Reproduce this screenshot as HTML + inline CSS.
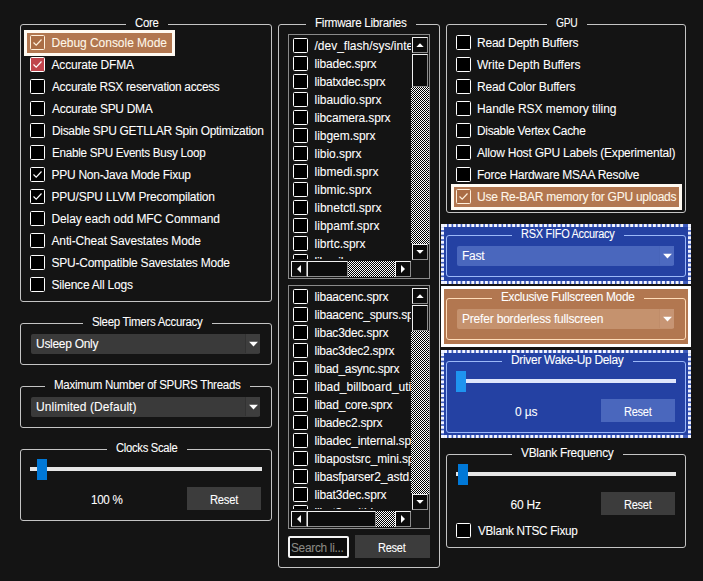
<!DOCTYPE html>
<html><head><meta charset="utf-8"><style>
html,body{margin:0;padding:0;background:#141414;width:703px;height:581px;overflow:hidden;}
.a{position:absolute;}
.t{position:absolute;white-space:pre;font-family:"Liberation Sans", sans-serif;font-size:12px;color:#fff;-webkit-text-stroke:0.08px currentColor;}
</style></head><body>
<div class="a" style="left:20px;top:24px;width:252px;height:278px;border:1px solid #c4c4c4;border-radius:3px;box-sizing:border-box;"></div>
<div class="a" style="left:126px;top:22px;width:42px;height:5px;background:#141414;"></div>
<div class="t" style="left: 135px; top: 15.04px; color: rgb(255, 255, 255); font-size: 12px; line-height: 16px; letter-spacing: -0.3px; transform: scaleX(0.9471); transform-origin: 0px 0px;">Core</div>
<div class="a" style="left:24px;top:30px;width:151px;height:26px;background:#b27750;border:3px solid #fffaf2;box-sizing:border-box;"></div>
<div class="a" style="left:30px;top:35px;width:15px;height:15px;border:1px solid #fff0dc;border-radius:1.5px;box-sizing:border-box;background:#aa6d45;"></div>
<svg class="a" style="left:30px;top:35px" width="15" height="15" viewBox="0 0 15 15"><path d="M3.5 7.5 L6.2 10.2 L11.5 4.5" fill="none" stroke="#fff0dc" stroke-width="1.15"></path></svg>
<div class="t" style="left: 51.5px; top: 34.84px; color: rgb(255, 247, 234); font-size: 12px; line-height: 16px; letter-spacing: -0.034px;">Debug Console Mode</div>
<div class="a" style="left:30px;top:57px;width:15px;height:15px;border:1px solid #ffffff;border-radius:1.5px;box-sizing:border-box;background:#c0444c;"></div>
<svg class="a" style="left:30px;top:57px" width="15" height="15" viewBox="0 0 15 15"><path d="M3.5 7.5 L6.2 10.2 L11.5 4.5" fill="none" stroke="#ffffff" stroke-width="1.15"></path></svg>
<div class="t" style="left: 51.5px; top: 56.84px; color: rgb(255, 255, 255); font-size: 12px; line-height: 16px; letter-spacing: -0.182px;">Accurate DFMA</div>
<div class="a" style="left:30px;top:79px;width:15px;height:15px;border:1px solid #ffffff;border-radius:1.5px;box-sizing:border-box;background:#000;"></div>
<div class="t" style="left: 51.5px; top: 78.84px; color: rgb(255, 255, 255); font-size: 12px; line-height: 16px; letter-spacing: -0.3px; transform: scaleX(0.9885); transform-origin: 0px 0px;">Accurate RSX reservation access</div>
<div class="a" style="left:30px;top:101px;width:15px;height:15px;border:1px solid #ffffff;border-radius:1.5px;box-sizing:border-box;background:#000;"></div>
<div class="t" style="left: 51.5px; top: 100.84px; color: rgb(255, 255, 255); font-size: 12px; line-height: 16px; letter-spacing: -0.3px; transform: scaleX(0.9992); transform-origin: 0px 0px;">Accurate SPU DMA</div>
<div class="a" style="left:30px;top:123px;width:15px;height:15px;border:1px solid #ffffff;border-radius:1.5px;box-sizing:border-box;background:#000;"></div>
<div class="t" style="left: 51.5px; top: 122.84px; color: rgb(255, 255, 255); font-size: 12px; line-height: 16px; letter-spacing: -0.3px; transform: scaleX(0.9961); transform-origin: 0px 0px;">Disable SPU GETLLAR Spin Optimization</div>
<div class="a" style="left:30px;top:145px;width:15px;height:15px;border:1px solid #ffffff;border-radius:1.5px;box-sizing:border-box;background:#000;"></div>
<div class="t" style="left: 51.5px; top: 144.84px; color: rgb(255, 255, 255); font-size: 12px; line-height: 16px; letter-spacing: -0.3px; transform: scaleX(0.9756); transform-origin: 0px 0px;">Enable SPU Events Busy Loop</div>
<div class="a" style="left:30px;top:167px;width:15px;height:15px;border:1px solid #ffffff;border-radius:1.5px;box-sizing:border-box;background:#000;"></div>
<svg class="a" style="left:30px;top:167px" width="15" height="15" viewBox="0 0 15 15"><path d="M3.5 7.5 L6.2 10.2 L11.5 4.5" fill="none" stroke="#ffffff" stroke-width="1.15"></path></svg>
<div class="t" style="left: 51.5px; top: 166.84px; color: rgb(255, 255, 255); font-size: 12px; line-height: 16px; letter-spacing: -0.268px;">PPU Non-Java Mode Fixup</div>
<div class="a" style="left:30px;top:189px;width:15px;height:15px;border:1px solid #ffffff;border-radius:1.5px;box-sizing:border-box;background:#000;"></div>
<svg class="a" style="left:30px;top:189px" width="15" height="15" viewBox="0 0 15 15"><path d="M3.5 7.5 L6.2 10.2 L11.5 4.5" fill="none" stroke="#ffffff" stroke-width="1.15"></path></svg>
<div class="t" style="left: 51.5px; top: 188.84px; color: rgb(255, 255, 255); font-size: 12px; line-height: 16px; letter-spacing: -0.219px;">PPU/SPU LLVM Precompilation</div>
<div class="a" style="left:30px;top:211px;width:15px;height:15px;border:1px solid #ffffff;border-radius:1.5px;box-sizing:border-box;background:#000;"></div>
<div class="t" style="left: 51.5px; top: 210.84px; color: rgb(255, 255, 255); font-size: 12px; line-height: 16px; letter-spacing: -0.116px;">Delay each odd MFC Command</div>
<div class="a" style="left:30px;top:233px;width:15px;height:15px;border:1px solid #ffffff;border-radius:1.5px;box-sizing:border-box;background:#000;"></div>
<div class="t" style="left: 51.5px; top: 232.84px; color: rgb(255, 255, 255); font-size: 12px; line-height: 16px; letter-spacing: -0.13px;">Anti-Cheat Savestates Mode</div>
<div class="a" style="left:30px;top:255px;width:15px;height:15px;border:1px solid #ffffff;border-radius:1.5px;box-sizing:border-box;background:#000;"></div>
<div class="t" style="left: 51.5px; top: 254.84px; color: rgb(255, 255, 255); font-size: 12px; line-height: 16px; letter-spacing: -0.239px;">SPU-Compatible Savestates Mode</div>
<div class="a" style="left:30px;top:277px;width:15px;height:15px;border:1px solid #ffffff;border-radius:1.5px;box-sizing:border-box;background:#000;"></div>
<div class="t" style="left: 51.5px; top: 276.84px; color: rgb(255, 255, 255); font-size: 12px; line-height: 16px; letter-spacing: -0.216px;">Silence All Logs</div>
<div class="a" style="left:20px;top:323px;width:252px;height:42px;border:1px solid #c4c4c4;border-radius:3px;box-sizing:border-box;"></div>
<div class="a" style="left:83px;top:321px;width:129px;height:5px;background:#141414;"></div>
<div class="t" style="left: 92px; top: 314.04px; color: rgb(255, 255, 255); font-size: 12px; line-height: 16px; letter-spacing: -0.3px; transform: scaleX(0.9546); transform-origin: 0px 0px;">Sleep Timers Accuracy</div>
<div class="a" style="left:31px;top:334px;width:229px;height:20px;background:#3a3a3a;border-radius:2px;"></div>
<div class="a" style="left:245px;top:334px;width:15px;height:19px;background:#3e3e3e;border-left:1px solid #323232;box-sizing:border-box;"></div>
<svg class="a" style="left:0;top:0" width="703" height="581"><path d="M249.1 341.8 H257.9 L253.5 346.4 Z" fill="#fff"></path></svg>
<div class="t" style="left: 36px; top: 335.84px; color: rgb(255, 255, 255); font-size: 12px; line-height: 16px; letter-spacing: -0.287px;">Usleep Only</div>
<div class="a" style="left:20px;top:386px;width:252px;height:42px;border:1px solid #c4c4c4;border-radius:3px;box-sizing:border-box;"></div>
<div class="a" style="left:45px;top:384px;width:205px;height:5px;background:#141414;"></div>
<div class="t" style="left: 54px; top: 377.04px; color: rgb(255, 255, 255); font-size: 12px; line-height: 16px; letter-spacing: -0.3px; transform: scaleX(0.962); transform-origin: 0px 0px;">Maximum Number of SPURS Threads</div>
<div class="a" style="left:31px;top:397px;width:229px;height:20px;background:#3a3a3a;border-radius:2px;"></div>
<div class="a" style="left:245px;top:397px;width:15px;height:19px;background:#3e3e3e;border-left:1px solid #323232;box-sizing:border-box;"></div>
<svg class="a" style="left:0;top:0" width="703" height="581"><path d="M249.1 404.8 H257.9 L253.5 409.4 Z" fill="#fff"></path></svg>
<div class="t" style="left: 36px; top: 398.84px; color: rgb(255, 255, 255); font-size: 12px; line-height: 16px; letter-spacing: 0.063px;">Unlimited (Default)</div>
<div class="a" style="left:20px;top:449px;width:252px;height:72px;border:1px solid #c4c4c4;border-radius:3px;box-sizing:border-box;"></div>
<div class="a" style="left:107px;top:447px;width:80px;height:5px;background:#141414;"></div>
<div class="t" style="left: 116px; top: 440.04px; color: rgb(255, 255, 255); font-size: 12px; line-height: 16px; letter-spacing: -0.3px; transform: scaleX(0.9351); transform-origin: 0px 0px;">Clocks Scale</div>
<div class="a" style="left:30px;top:467px;width:232px;height:4px;background:#e6e6e6;"></div>
<div class="a" style="left:37px;top:459px;width:10px;height:21px;background:#0078d7;"></div>
<div class="t" style="left: 90.5px; top: 492.34px; color: rgb(255, 255, 255); font-size: 12px; line-height: 16px; letter-spacing: -0.3px; transform: scaleX(0.9683); transform-origin: 0px 0px;">100 %</div>
<div class="a" style="left:187px;top:487px;width:74px;height:23px;background:#3c3c3c;"></div>
<div class="t" style="left: 209.8px; top: 491.84px; color: rgb(255, 255, 255); font-size: 12px; line-height: 16px; letter-spacing: -0.3px; transform: scaleX(0.9377); transform-origin: 0px 0px;">Reset</div>
<div class="a" style="left:278px;top:24px;width:162px;height:544px;border:1px solid #c4c4c4;border-radius:3px;box-sizing:border-box;"></div>
<div class="a" style="left:306px;top:22px;width:110px;height:5px;background:#141414;"></div>
<div class="t" style="left: 315px; top: 15.04px; color: rgb(255, 255, 255); font-size: 12px; line-height: 16px; letter-spacing: -0.3px; transform: scaleX(0.9739); transform-origin: 0px 0px;">Firmware Libraries</div>
<div class="a" style="left:288px;top:34px;width:142px;height:245px;border:1px solid #8a8a8a;box-sizing:border-box;"></div>
<div class="a" style="left:289px;top:35px;width:122px;height:224px;overflow:hidden"><div class="a" style="left:4px;top:3px;width:15px;height:15px;border:1px solid #fff;border-radius:1.5px;box-sizing:border-box;background:#000"></div><div class="t" style="left: 25.5px; top: 3.34px; line-height: 16px; letter-spacing: 0px;">/dev_flash/sys/internal</div><div class="a" style="left:4px;top:21px;width:15px;height:15px;border:1px solid #fff;border-radius:1.5px;box-sizing:border-box;background:#000"></div><div class="t" style="left: 25.5px; top: 21.34px; line-height: 16px; letter-spacing: -0.185px;">libadec.sprx</div><div class="a" style="left:4px;top:39px;width:15px;height:15px;border:1px solid #fff;border-radius:1.5px;box-sizing:border-box;background:#000"></div><div class="t" style="left: 25.5px; top: 39.34px; line-height: 16px; letter-spacing: -0.183px;">libatxdec.sprx</div><div class="a" style="left:4px;top:57px;width:15px;height:15px;border:1px solid #fff;border-radius:1.5px;box-sizing:border-box;background:#000"></div><div class="t" style="left: 25.5px; top: 57.34px; line-height: 16px; letter-spacing: -0.031px;">libaudio.sprx</div><div class="a" style="left:4px;top:75px;width:15px;height:15px;border:1px solid #fff;border-radius:1.5px;box-sizing:border-box;background:#000"></div><div class="t" style="left: 25.5px; top: 75.34px; line-height: 16px; letter-spacing: -0.156px;">libcamera.sprx</div><div class="a" style="left:4px;top:93px;width:15px;height:15px;border:1px solid #fff;border-radius:1.5px;box-sizing:border-box;background:#000"></div><div class="t" style="left: 25.5px; top: 93.34px; line-height: 16px; letter-spacing: -0.036px;">libgem.sprx</div><div class="a" style="left:4px;top:111px;width:15px;height:15px;border:1px solid #fff;border-radius:1.5px;box-sizing:border-box;background:#000"></div><div class="t" style="left: 25.5px; top: 111.34px; line-height: 16px; letter-spacing: -0.04px;">libio.sprx</div><div class="a" style="left:4px;top:129px;width:15px;height:15px;border:1px solid #fff;border-radius:1.5px;box-sizing:border-box;background:#000"></div><div class="t" style="left: 25.5px; top: 129.34px; line-height: 16px; letter-spacing: -0.003px;">libmedi.sprx</div><div class="a" style="left:4px;top:147px;width:15px;height:15px;border:1px solid #fff;border-radius:1.5px;box-sizing:border-box;background:#000"></div><div class="t" style="left: 25.5px; top: 147.34px; line-height: 16px; letter-spacing: 0.033px;">libmic.sprx</div><div class="a" style="left:4px;top:165px;width:15px;height:15px;border:1px solid #fff;border-radius:1.5px;box-sizing:border-box;background:#000"></div><div class="t" style="left: 25.5px; top: 165.34px; line-height: 16px; letter-spacing: 0.023px;">libnetctl.sprx</div><div class="a" style="left:4px;top:183px;width:15px;height:15px;border:1px solid #fff;border-radius:1.5px;box-sizing:border-box;background:#000"></div><div class="t" style="left: 25.5px; top: 183.34px; line-height: 16px; letter-spacing: 0.028px;">libpamf.sprx</div><div class="a" style="left:4px;top:201px;width:15px;height:15px;border:1px solid #fff;border-radius:1.5px;box-sizing:border-box;background:#000"></div><div class="t" style="left: 25.5px; top: 201.34px; line-height: 16px; letter-spacing: -0.034px;">librtc.sprx</div><div class="a" style="left:4px;top:219px;width:15px;height:15px;border:1px solid #fff;border-radius:1.5px;box-sizing:border-box;background:#000"></div><div class="t" style="left: 25.5px; top: 219.34px; line-height: 16px; letter-spacing: -0.178px;">libsail.sprx</div></div>
<div class="a" style="left:412px;top:37px;width:16px;height:16px;background:#0c0c0c;border-left:1px solid #f0f0f0;border-top:1px solid #f0f0f0;border-right:1px solid #8c8c8c;border-bottom:1px solid #8c8c8c;box-sizing:border-box;"></div>
<svg class="a" style="left:0;top:0" width="703" height="581"><path d="M416.3 47.0 H423.7 L420.0 43.2 Z" fill="#fff"></path></svg>
<div class="a" style="left:412px;top:54px;width:16px;height:33px;background:#0c0c0c;border-left:1px solid #f0f0f0;border-top:1px solid #f0f0f0;border-right:1px solid #8c8c8c;border-bottom:1px solid #8c8c8c;box-sizing:border-box;"></div>
<div class="a" style="left:411px;top:87px;width:18px;height:157px;background:repeating-conic-gradient(#ffffff 0 25%, #000 0 50%) 0 0/2px 2px;"></div>
<div class="a" style="left:412px;top:244px;width:16px;height:16px;background:#0c0c0c;border-left:1px solid #f0f0f0;border-top:1px solid #f0f0f0;border-right:1px solid #8c8c8c;border-bottom:1px solid #8c8c8c;box-sizing:border-box;"></div>
<svg class="a" style="left:0;top:0" width="703" height="581"><path d="M416.3 250.0 H423.7 L420.0 253.8 Z" fill="#fff"></path></svg>
<div class="a" style="left:291px;top:261px;width:16px;height:16px;background:#0c0c0c;border-left:1px solid #f0f0f0;border-top:1px solid #f0f0f0;border-right:1px solid #8c8c8c;border-bottom:1px solid #8c8c8c;box-sizing:border-box;"></div>
<svg class="a" style="left:0;top:0" width="703" height="581"><path d="M301.0 265.0 V273.0 L297.0 269.0 Z" fill="#fff"></path></svg>
<div class="a" style="left:307px;top:261px;width:41px;height:16px;background:#0c0c0c;border-left:1px solid #f0f0f0;border-top:1px solid #f0f0f0;border-right:1px solid #8c8c8c;border-bottom:1px solid #8c8c8c;box-sizing:border-box;"></div>
<div class="a" style="left:348px;top:261px;width:47px;height:16px;background:repeating-conic-gradient(#ffffff 0 25%, #000 0 50%) 0 0/2px 2px;"></div>
<div class="a" style="left:395px;top:261px;width:16px;height:16px;background:#0c0c0c;border-left:1px solid #f0f0f0;border-top:1px solid #f0f0f0;border-right:1px solid #8c8c8c;border-bottom:1px solid #8c8c8c;box-sizing:border-box;"></div>
<svg class="a" style="left:0;top:0" width="703" height="581"><path d="M401.0 265.0 V273.0 L405.0 269.0 Z" fill="#fff"></path></svg>
<div class="a" style="left:288px;top:285px;width:142px;height:244px;border:1px solid #8a8a8a;box-sizing:border-box;"></div>
<div class="a" style="left:289px;top:286px;width:122px;height:223px;overflow:hidden"><div class="a" style="left:4px;top:3px;width:15px;height:15px;border:1px solid #fff;border-radius:1.5px;box-sizing:border-box;background:#000"></div><div class="t" style="left: 25.5px; top: 3.34px; line-height: 16px; letter-spacing: -0.209px;">libaacenc.sprx</div><div class="a" style="left:4px;top:21px;width:15px;height:15px;border:1px solid #fff;border-radius:1.5px;box-sizing:border-box;background:#000"></div><div class="t" style="left: 25.5px; top: 21.34px; line-height: 16px; letter-spacing: -0.208px;">libaacenc_spurs.sprx</div><div class="a" style="left:4px;top:39px;width:15px;height:15px;border:1px solid #fff;border-radius:1.5px;box-sizing:border-box;background:#000"></div><div class="t" style="left: 25.5px; top: 39.34px; line-height: 16px; letter-spacing: -0.209px;">libac3dec.sprx</div><div class="a" style="left:4px;top:57px;width:15px;height:15px;border:1px solid #fff;border-radius:1.5px;box-sizing:border-box;background:#000"></div><div class="t" style="left: 25.5px; top: 57.34px; line-height: 16px; letter-spacing: -0.242px;">libac3dec2.sprx</div><div class="a" style="left:4px;top:75px;width:15px;height:15px;border:1px solid #fff;border-radius:1.5px;box-sizing:border-box;background:#000"></div><div class="t" style="left: 25.5px; top: 75.34px; line-height: 16px; letter-spacing: -0.293px;">libad_async.sprx</div><div class="a" style="left:4px;top:93px;width:15px;height:15px;border:1px solid #fff;border-radius:1.5px;box-sizing:border-box;background:#000"></div><div class="t" style="left: 25.5px; top: 93.34px; line-height: 16px; letter-spacing: 0px;">libad_billboard_util.sprx</div><div class="a" style="left:4px;top:111px;width:15px;height:15px;border:1px solid #fff;border-radius:1.5px;box-sizing:border-box;background:#000"></div><div class="t" style="left: 25.5px; top: 111.34px; line-height: 16px; letter-spacing: -0.241px;">libad_core.sprx</div><div class="a" style="left:4px;top:129px;width:15px;height:15px;border:1px solid #fff;border-radius:1.5px;box-sizing:border-box;background:#000"></div><div class="t" style="left: 25.5px; top: 129.34px; line-height: 16px; letter-spacing: -0.227px;">libadec2.sprx</div><div class="a" style="left:4px;top:147px;width:15px;height:15px;border:1px solid #fff;border-radius:1.5px;box-sizing:border-box;background:#000"></div><div class="t" style="left: 25.5px; top: 147.34px; line-height: 16px; letter-spacing: -0.193px;">libadec_internal.sprx</div><div class="a" style="left:4px;top:165px;width:15px;height:15px;border:1px solid #fff;border-radius:1.5px;box-sizing:border-box;background:#000"></div><div class="t" style="left: 25.5px; top: 165.34px; line-height: 16px; letter-spacing: -0.112px;">libapostsrc_mini.sprx</div><div class="a" style="left:4px;top:183px;width:15px;height:15px;border:1px solid #fff;border-radius:1.5px;box-sizing:border-box;background:#000"></div><div class="t" style="left: 25.5px; top: 183.34px; line-height: 16px; letter-spacing: -0.197px;">libasfparser2_astd.sprx</div><div class="a" style="left:4px;top:201px;width:15px;height:15px;border:1px solid #fff;border-radius:1.5px;box-sizing:border-box;background:#000"></div><div class="t" style="left: 25.5px; top: 201.34px; line-height: 16px; letter-spacing: -0.157px;">libat3dec.sprx</div><div class="a" style="left:4px;top:219px;width:15px;height:15px;border:1px solid #fff;border-radius:1.5px;box-sizing:border-box;background:#000"></div><div class="t" style="left: 25.5px; top: 219.34px; line-height: 16px; letter-spacing: -0.193px;">libat3multidec.sprx</div></div>
<div class="a" style="left:412px;top:288px;width:16px;height:16px;background:#0c0c0c;border-left:1px solid #f0f0f0;border-top:1px solid #f0f0f0;border-right:1px solid #8c8c8c;border-bottom:1px solid #8c8c8c;box-sizing:border-box;"></div>
<svg class="a" style="left:0;top:0" width="703" height="581"><path d="M416.3 298.0 H423.7 L420.0 294.2 Z" fill="#fff"></path></svg>
<div class="a" style="left:412px;top:305px;width:16px;height:26px;background:#0c0c0c;border-left:1px solid #f0f0f0;border-top:1px solid #f0f0f0;border-right:1px solid #8c8c8c;border-bottom:1px solid #8c8c8c;box-sizing:border-box;"></div>
<div class="a" style="left:411px;top:331px;width:18px;height:163px;background:repeating-conic-gradient(#ffffff 0 25%, #000 0 50%) 0 0/2px 2px;"></div>
<div class="a" style="left:412px;top:494px;width:16px;height:16px;background:#0c0c0c;border-left:1px solid #f0f0f0;border-top:1px solid #f0f0f0;border-right:1px solid #8c8c8c;border-bottom:1px solid #8c8c8c;box-sizing:border-box;"></div>
<svg class="a" style="left:0;top:0" width="703" height="581"><path d="M416.3 500.0 H423.7 L420.0 503.8 Z" fill="#fff"></path></svg>
<div class="a" style="left:291px;top:511px;width:16px;height:16px;background:#0c0c0c;border-left:1px solid #f0f0f0;border-top:1px solid #f0f0f0;border-right:1px solid #8c8c8c;border-bottom:1px solid #8c8c8c;box-sizing:border-box;"></div>
<svg class="a" style="left:0;top:0" width="703" height="581"><path d="M301.0 515.0 V523.0 L297.0 519.0 Z" fill="#fff"></path></svg>
<div class="a" style="left:307px;top:511px;width:69px;height:16px;background:#0c0c0c;border-left:1px solid #f0f0f0;border-top:1px solid #f0f0f0;border-right:1px solid #8c8c8c;border-bottom:1px solid #8c8c8c;box-sizing:border-box;"></div>
<div class="a" style="left:376px;top:511px;width:19px;height:16px;background:repeating-conic-gradient(#ffffff 0 25%, #000 0 50%) 0 0/2px 2px;"></div>
<div class="a" style="left:395px;top:511px;width:16px;height:16px;background:#0c0c0c;border-left:1px solid #f0f0f0;border-top:1px solid #f0f0f0;border-right:1px solid #8c8c8c;border-bottom:1px solid #8c8c8c;box-sizing:border-box;"></div>
<svg class="a" style="left:0;top:0" width="703" height="581"><path d="M401.0 515.0 V523.0 L405.0 519.0 Z" fill="#fff"></path></svg>
<div class="a" style="left:288px;top:536px;width:61px;height:22px;border:2px solid #f4f4f4;border-radius:2px;box-sizing:border-box;background:#0c0c0c;"></div>
<div class="t" style="left: 291px; top: 540.14px; color: rgb(138, 138, 132); font-size: 12px; line-height: 16px; letter-spacing: -0.3px; transform: scaleX(0.9888); transform-origin: 0px 0px;">Search li...</div>
<div class="a" style="left:355px;top:535px;width:75px;height:23px;background:#3c3c3c;"></div>
<div class="t" style="left: 377.8px; top: 539.84px; color: rgb(255, 255, 255); font-size: 12px; line-height: 16px; letter-spacing: -0.3px; transform: scaleX(0.921); transform-origin: 0px 0px;">Reset</div>
<div class="a" style="left:446px;top:24px;width:240px;height:189px;border:1px solid #c4c4c4;border-radius:3px;box-sizing:border-box;"></div>
<div class="a" style="left:547px;top:22px;width:40px;height:5px;background:#141414;"></div>
<div class="t" style="left: 556px; top: 15.04px; color: rgb(255, 255, 255); font-size: 12px; line-height: 16px; letter-spacing: -0.3px; transform: scaleX(0.8563); transform-origin: 0px 0px;">GPU</div>
<div class="a" style="left:456px;top:35px;width:15px;height:15px;border:1px solid #ffffff;border-radius:1.5px;box-sizing:border-box;background:#000;"></div>
<div class="t" style="left: 477px; top: 34.84px; color: rgb(255, 255, 255); font-size: 12px; line-height: 16px; letter-spacing: -0.217px;">Read Depth Buffers</div>
<div class="a" style="left:456px;top:57px;width:15px;height:15px;border:1px solid #ffffff;border-radius:1.5px;box-sizing:border-box;background:#000;"></div>
<div class="t" style="left: 477px; top: 56.84px; color: rgb(255, 255, 255); font-size: 12px; line-height: 16px; letter-spacing: -0.043px;">Write Depth Buffers</div>
<div class="a" style="left:456px;top:79px;width:15px;height:15px;border:1px solid #ffffff;border-radius:1.5px;box-sizing:border-box;background:#000;"></div>
<div class="t" style="left: 477px; top: 78.84px; color: rgb(255, 255, 255); font-size: 12px; line-height: 16px; letter-spacing: -0.197px;">Read Color Buffers</div>
<div class="a" style="left:456px;top:101px;width:15px;height:15px;border:1px solid #ffffff;border-radius:1.5px;box-sizing:border-box;background:#000;"></div>
<div class="t" style="left: 477px; top: 100.84px; color: rgb(255, 255, 255); font-size: 12px; line-height: 16px; letter-spacing: -0.053px;">Handle RSX memory tiling</div>
<div class="a" style="left:456px;top:123px;width:15px;height:15px;border:1px solid #ffffff;border-radius:1.5px;box-sizing:border-box;background:#000;"></div>
<div class="t" style="left: 477px; top: 122.84px; color: rgb(255, 255, 255); font-size: 12px; line-height: 16px; letter-spacing: -0.3px; transform: scaleX(0.9917); transform-origin: 0px 0px;">Disable Vertex Cache</div>
<div class="a" style="left:456px;top:145px;width:15px;height:15px;border:1px solid #ffffff;border-radius:1.5px;box-sizing:border-box;background:#000;"></div>
<div class="t" style="left: 477px; top: 144.84px; color: rgb(255, 255, 255); font-size: 12px; line-height: 16px; letter-spacing: -0.217px;">Allow Host GPU Labels (Experimental)</div>
<div class="a" style="left:456px;top:167px;width:15px;height:15px;border:1px solid #ffffff;border-radius:1.5px;box-sizing:border-box;background:#000;"></div>
<div class="t" style="left: 477px; top: 166.84px; color: rgb(255, 255, 255); font-size: 12px; line-height: 16px; letter-spacing: -0.266px;">Force Hardware MSAA Resolve</div>
<div class="a" style="left:451px;top:184px;width:231px;height:26px;background:#b27750;border:3px solid #fffaf2;box-sizing:border-box;"></div>
<div class="a" style="left:456px;top:189px;width:15px;height:15px;border:1px solid #fff0dc;border-radius:1.5px;box-sizing:border-box;background:#aa6d45;"></div>
<svg class="a" style="left:456px;top:189px" width="15" height="15" viewBox="0 0 15 15"><path d="M3.5 7.5 L6.2 10.2 L11.5 4.5" fill="none" stroke="#fff0dc" stroke-width="1.15"></path></svg>
<div class="t" style="left: 477px; top: 188.84px; color: rgb(255, 247, 234); font-size: 12px; line-height: 16px; letter-spacing: -0.247px;">Use Re-BAR memory for GPU uploads</div>
<div class="a" style="left:441px;top:224px;width:250px;height:60px;background:#2441a3;"></div>
<div class="a" style="left:441px;top:224px;width:250px;height:3px;background:#3f5cbc;"></div>
<div class="a" style="left:441px;top:281px;width:250px;height:3px;background:#3f5cbc;"></div>
<div class="a" style="left:441px;top:224px;width:3px;height:60px;background:#3f5cbc;"></div>
<div class="a" style="left:688px;top:224px;width:3px;height:60px;background:#3f5cbc;"></div>
<svg class="a" style="left:0;top:0" width="703" height="581"><g fill="#f2f4ff"><rect x="441" y="224" width="3" height="3"></rect><rect x="688" y="224" width="3" height="3"></rect><rect x="441" y="281" width="3" height="3"></rect><rect x="688" y="281" width="3" height="3"></rect><rect x="444.10" y="224" width="2.9" height="3"></rect><rect x="444.10" y="281" width="2.9" height="3"></rect><rect x="448.64" y="224" width="2.9" height="3"></rect><rect x="448.64" y="281" width="2.9" height="3"></rect><rect x="453.18" y="224" width="2.9" height="3"></rect><rect x="453.18" y="281" width="2.9" height="3"></rect><rect x="457.72" y="224" width="2.9" height="3"></rect><rect x="457.72" y="281" width="2.9" height="3"></rect><rect x="462.26" y="224" width="2.9" height="3"></rect><rect x="462.26" y="281" width="2.9" height="3"></rect><rect x="466.80" y="224" width="2.9" height="3"></rect><rect x="466.80" y="281" width="2.9" height="3"></rect><rect x="471.34" y="224" width="2.9" height="3"></rect><rect x="471.34" y="281" width="2.9" height="3"></rect><rect x="475.88" y="224" width="2.9" height="3"></rect><rect x="475.88" y="281" width="2.9" height="3"></rect><rect x="480.42" y="224" width="2.9" height="3"></rect><rect x="480.42" y="281" width="2.9" height="3"></rect><rect x="484.96" y="224" width="2.9" height="3"></rect><rect x="484.96" y="281" width="2.9" height="3"></rect><rect x="489.50" y="224" width="2.9" height="3"></rect><rect x="489.50" y="281" width="2.9" height="3"></rect><rect x="494.04" y="224" width="2.9" height="3"></rect><rect x="494.04" y="281" width="2.9" height="3"></rect><rect x="498.58" y="224" width="2.9" height="3"></rect><rect x="498.58" y="281" width="2.9" height="3"></rect><rect x="503.12" y="224" width="2.9" height="3"></rect><rect x="503.12" y="281" width="2.9" height="3"></rect><rect x="507.66" y="224" width="2.9" height="3"></rect><rect x="507.66" y="281" width="2.9" height="3"></rect><rect x="512.20" y="224" width="2.9" height="3"></rect><rect x="512.20" y="281" width="2.9" height="3"></rect><rect x="516.74" y="224" width="2.9" height="3"></rect><rect x="516.74" y="281" width="2.9" height="3"></rect><rect x="521.28" y="224" width="2.9" height="3"></rect><rect x="521.28" y="281" width="2.9" height="3"></rect><rect x="525.82" y="224" width="2.9" height="3"></rect><rect x="525.82" y="281" width="2.9" height="3"></rect><rect x="530.36" y="224" width="2.9" height="3"></rect><rect x="530.36" y="281" width="2.9" height="3"></rect><rect x="534.90" y="224" width="2.9" height="3"></rect><rect x="534.90" y="281" width="2.9" height="3"></rect><rect x="539.44" y="224" width="2.9" height="3"></rect><rect x="539.44" y="281" width="2.9" height="3"></rect><rect x="543.98" y="224" width="2.9" height="3"></rect><rect x="543.98" y="281" width="2.9" height="3"></rect><rect x="548.52" y="224" width="2.9" height="3"></rect><rect x="548.52" y="281" width="2.9" height="3"></rect><rect x="553.06" y="224" width="2.9" height="3"></rect><rect x="553.06" y="281" width="2.9" height="3"></rect><rect x="557.60" y="224" width="2.9" height="3"></rect><rect x="557.60" y="281" width="2.9" height="3"></rect><rect x="562.14" y="224" width="2.9" height="3"></rect><rect x="562.14" y="281" width="2.9" height="3"></rect><rect x="566.68" y="224" width="2.9" height="3"></rect><rect x="566.68" y="281" width="2.9" height="3"></rect><rect x="571.22" y="224" width="2.9" height="3"></rect><rect x="571.22" y="281" width="2.9" height="3"></rect><rect x="575.76" y="224" width="2.9" height="3"></rect><rect x="575.76" y="281" width="2.9" height="3"></rect><rect x="580.30" y="224" width="2.9" height="3"></rect><rect x="580.30" y="281" width="2.9" height="3"></rect><rect x="584.84" y="224" width="2.9" height="3"></rect><rect x="584.84" y="281" width="2.9" height="3"></rect><rect x="589.38" y="224" width="2.9" height="3"></rect><rect x="589.38" y="281" width="2.9" height="3"></rect><rect x="593.92" y="224" width="2.9" height="3"></rect><rect x="593.92" y="281" width="2.9" height="3"></rect><rect x="598.46" y="224" width="2.9" height="3"></rect><rect x="598.46" y="281" width="2.9" height="3"></rect><rect x="603.00" y="224" width="2.9" height="3"></rect><rect x="603.00" y="281" width="2.9" height="3"></rect><rect x="607.54" y="224" width="2.9" height="3"></rect><rect x="607.54" y="281" width="2.9" height="3"></rect><rect x="612.08" y="224" width="2.9" height="3"></rect><rect x="612.08" y="281" width="2.9" height="3"></rect><rect x="616.62" y="224" width="2.9" height="3"></rect><rect x="616.62" y="281" width="2.9" height="3"></rect><rect x="621.16" y="224" width="2.9" height="3"></rect><rect x="621.16" y="281" width="2.9" height="3"></rect><rect x="625.70" y="224" width="2.9" height="3"></rect><rect x="625.70" y="281" width="2.9" height="3"></rect><rect x="630.24" y="224" width="2.9" height="3"></rect><rect x="630.24" y="281" width="2.9" height="3"></rect><rect x="634.78" y="224" width="2.9" height="3"></rect><rect x="634.78" y="281" width="2.9" height="3"></rect><rect x="639.32" y="224" width="2.9" height="3"></rect><rect x="639.32" y="281" width="2.9" height="3"></rect><rect x="643.86" y="224" width="2.9" height="3"></rect><rect x="643.86" y="281" width="2.9" height="3"></rect><rect x="648.40" y="224" width="2.9" height="3"></rect><rect x="648.40" y="281" width="2.9" height="3"></rect><rect x="652.94" y="224" width="2.9" height="3"></rect><rect x="652.94" y="281" width="2.9" height="3"></rect><rect x="657.48" y="224" width="2.9" height="3"></rect><rect x="657.48" y="281" width="2.9" height="3"></rect><rect x="662.02" y="224" width="2.9" height="3"></rect><rect x="662.02" y="281" width="2.9" height="3"></rect><rect x="666.56" y="224" width="2.9" height="3"></rect><rect x="666.56" y="281" width="2.9" height="3"></rect><rect x="671.10" y="224" width="2.9" height="3"></rect><rect x="671.10" y="281" width="2.9" height="3"></rect><rect x="675.64" y="224" width="2.9" height="3"></rect><rect x="675.64" y="281" width="2.9" height="3"></rect><rect x="680.18" y="224" width="2.9" height="3"></rect><rect x="680.18" y="281" width="2.9" height="3"></rect><rect x="441" y="227.20" width="3" height="2.9"></rect><rect x="688" y="227.20" width="3" height="2.9"></rect><rect x="441" y="231.74" width="3" height="2.9"></rect><rect x="688" y="231.74" width="3" height="2.9"></rect><rect x="441" y="236.28" width="3" height="2.9"></rect><rect x="688" y="236.28" width="3" height="2.9"></rect><rect x="441" y="240.82" width="3" height="2.9"></rect><rect x="688" y="240.82" width="3" height="2.9"></rect><rect x="441" y="245.36" width="3" height="2.9"></rect><rect x="688" y="245.36" width="3" height="2.9"></rect><rect x="441" y="249.90" width="3" height="2.9"></rect><rect x="688" y="249.90" width="3" height="2.9"></rect><rect x="441" y="254.44" width="3" height="2.9"></rect><rect x="688" y="254.44" width="3" height="2.9"></rect><rect x="441" y="258.98" width="3" height="2.9"></rect><rect x="688" y="258.98" width="3" height="2.9"></rect><rect x="441" y="263.52" width="3" height="2.9"></rect><rect x="688" y="263.52" width="3" height="2.9"></rect><rect x="441" y="268.06" width="3" height="2.9"></rect><rect x="688" y="268.06" width="3" height="2.9"></rect><rect x="441" y="272.60" width="3" height="2.9"></rect><rect x="688" y="272.60" width="3" height="2.9"></rect><rect x="441" y="277.14" width="3" height="2.9"></rect><rect x="688" y="277.14" width="3" height="2.9"></rect></g></svg>
<div class="a" style="left:446px;top:235px;width:240px;height:42px;border:1px solid #9bb8f8;border-radius:3px;box-sizing:border-box;"></div>
<div class="a" style="left:512px;top:233px;width:112px;height:5px;background:#2441a3;"></div>
<div class="t" style="left: 521px; top: 226.04px; color: rgb(255, 255, 255); font-size: 12px; line-height: 16px; letter-spacing: -0.3px; transform: scaleX(0.9143); transform-origin: 0px 0px;">RSX FIFO Accuracy</div>
<div class="a" style="left:457px;top:246px;width:217px;height:20px;background:#4a67bd;border-radius:2px;"></div>
<div class="a" style="left:659px;top:246px;width:15px;height:19px;background:#4d6ac0;border-left:1px solid #4865ba;box-sizing:border-box;"></div>
<svg class="a" style="left:0;top:0" width="703" height="581"><path d="M663.1 253.8 H671.9 L667.5 258.4 Z" fill="#fff"></path></svg>
<div class="t" style="left: 462px; top: 247.84px; color: rgb(255, 255, 255); font-size: 12px; line-height: 16px; letter-spacing: -0.281px;">Fast</div>
<div class="a" style="left:441px;top:286px;width:250px;height:61px;background:#b27750;border:3px solid #ffffff;box-sizing:border-box;"></div>
<div class="a" style="left:446px;top:298px;width:240px;height:42px;border:1px solid #ffdcb8;border-radius:3px;box-sizing:border-box;"></div>
<div class="a" style="left:492px;top:296px;width:152px;height:5px;background:#b27750;"></div>
<div class="t" style="left: 501px; top: 289.04px; color: rgb(255, 255, 255); font-size: 12px; line-height: 16px; letter-spacing: -0.3px; transform: scaleX(0.9872); transform-origin: 0px 0px;">Exclusive Fullscreen Mode</div>
<div class="a" style="left:457px;top:309px;width:217px;height:20px;background:#c5926e;border-radius:2px;"></div>
<div class="a" style="left:659px;top:309px;width:15px;height:19px;background:#c79574;border-left:1px solid #c08d6a;box-sizing:border-box;"></div>
<svg class="a" style="left:0;top:0" width="703" height="581"><path d="M663.1 316.8 H671.9 L667.5 321.4 Z" fill="#fff"></path></svg>
<div class="t" style="left: 462px; top: 310.84px; color: rgb(255, 255, 255); font-size: 12px; line-height: 16px; letter-spacing: -0.194px;">Prefer borderless fullscreen</div>
<div class="a" style="left:441px;top:350px;width:250px;height:88px;background:#2441a3;"></div>
<div class="a" style="left:441px;top:350px;width:250px;height:3px;background:#3f5cbc;"></div>
<div class="a" style="left:441px;top:435px;width:250px;height:3px;background:#3f5cbc;"></div>
<div class="a" style="left:441px;top:350px;width:3px;height:88px;background:#3f5cbc;"></div>
<div class="a" style="left:688px;top:350px;width:3px;height:88px;background:#3f5cbc;"></div>
<svg class="a" style="left:0;top:0" width="703" height="581"><g fill="#f2f4ff"><rect x="441" y="350" width="3" height="3"></rect><rect x="688" y="350" width="3" height="3"></rect><rect x="441" y="435" width="3" height="3"></rect><rect x="688" y="435" width="3" height="3"></rect><rect x="444.10" y="350" width="2.9" height="3"></rect><rect x="444.10" y="435" width="2.9" height="3"></rect><rect x="448.64" y="350" width="2.9" height="3"></rect><rect x="448.64" y="435" width="2.9" height="3"></rect><rect x="453.18" y="350" width="2.9" height="3"></rect><rect x="453.18" y="435" width="2.9" height="3"></rect><rect x="457.72" y="350" width="2.9" height="3"></rect><rect x="457.72" y="435" width="2.9" height="3"></rect><rect x="462.26" y="350" width="2.9" height="3"></rect><rect x="462.26" y="435" width="2.9" height="3"></rect><rect x="466.80" y="350" width="2.9" height="3"></rect><rect x="466.80" y="435" width="2.9" height="3"></rect><rect x="471.34" y="350" width="2.9" height="3"></rect><rect x="471.34" y="435" width="2.9" height="3"></rect><rect x="475.88" y="350" width="2.9" height="3"></rect><rect x="475.88" y="435" width="2.9" height="3"></rect><rect x="480.42" y="350" width="2.9" height="3"></rect><rect x="480.42" y="435" width="2.9" height="3"></rect><rect x="484.96" y="350" width="2.9" height="3"></rect><rect x="484.96" y="435" width="2.9" height="3"></rect><rect x="489.50" y="350" width="2.9" height="3"></rect><rect x="489.50" y="435" width="2.9" height="3"></rect><rect x="494.04" y="350" width="2.9" height="3"></rect><rect x="494.04" y="435" width="2.9" height="3"></rect><rect x="498.58" y="350" width="2.9" height="3"></rect><rect x="498.58" y="435" width="2.9" height="3"></rect><rect x="503.12" y="350" width="2.9" height="3"></rect><rect x="503.12" y="435" width="2.9" height="3"></rect><rect x="507.66" y="350" width="2.9" height="3"></rect><rect x="507.66" y="435" width="2.9" height="3"></rect><rect x="512.20" y="350" width="2.9" height="3"></rect><rect x="512.20" y="435" width="2.9" height="3"></rect><rect x="516.74" y="350" width="2.9" height="3"></rect><rect x="516.74" y="435" width="2.9" height="3"></rect><rect x="521.28" y="350" width="2.9" height="3"></rect><rect x="521.28" y="435" width="2.9" height="3"></rect><rect x="525.82" y="350" width="2.9" height="3"></rect><rect x="525.82" y="435" width="2.9" height="3"></rect><rect x="530.36" y="350" width="2.9" height="3"></rect><rect x="530.36" y="435" width="2.9" height="3"></rect><rect x="534.90" y="350" width="2.9" height="3"></rect><rect x="534.90" y="435" width="2.9" height="3"></rect><rect x="539.44" y="350" width="2.9" height="3"></rect><rect x="539.44" y="435" width="2.9" height="3"></rect><rect x="543.98" y="350" width="2.9" height="3"></rect><rect x="543.98" y="435" width="2.9" height="3"></rect><rect x="548.52" y="350" width="2.9" height="3"></rect><rect x="548.52" y="435" width="2.9" height="3"></rect><rect x="553.06" y="350" width="2.9" height="3"></rect><rect x="553.06" y="435" width="2.9" height="3"></rect><rect x="557.60" y="350" width="2.9" height="3"></rect><rect x="557.60" y="435" width="2.9" height="3"></rect><rect x="562.14" y="350" width="2.9" height="3"></rect><rect x="562.14" y="435" width="2.9" height="3"></rect><rect x="566.68" y="350" width="2.9" height="3"></rect><rect x="566.68" y="435" width="2.9" height="3"></rect><rect x="571.22" y="350" width="2.9" height="3"></rect><rect x="571.22" y="435" width="2.9" height="3"></rect><rect x="575.76" y="350" width="2.9" height="3"></rect><rect x="575.76" y="435" width="2.9" height="3"></rect><rect x="580.30" y="350" width="2.9" height="3"></rect><rect x="580.30" y="435" width="2.9" height="3"></rect><rect x="584.84" y="350" width="2.9" height="3"></rect><rect x="584.84" y="435" width="2.9" height="3"></rect><rect x="589.38" y="350" width="2.9" height="3"></rect><rect x="589.38" y="435" width="2.9" height="3"></rect><rect x="593.92" y="350" width="2.9" height="3"></rect><rect x="593.92" y="435" width="2.9" height="3"></rect><rect x="598.46" y="350" width="2.9" height="3"></rect><rect x="598.46" y="435" width="2.9" height="3"></rect><rect x="603.00" y="350" width="2.9" height="3"></rect><rect x="603.00" y="435" width="2.9" height="3"></rect><rect x="607.54" y="350" width="2.9" height="3"></rect><rect x="607.54" y="435" width="2.9" height="3"></rect><rect x="612.08" y="350" width="2.9" height="3"></rect><rect x="612.08" y="435" width="2.9" height="3"></rect><rect x="616.62" y="350" width="2.9" height="3"></rect><rect x="616.62" y="435" width="2.9" height="3"></rect><rect x="621.16" y="350" width="2.9" height="3"></rect><rect x="621.16" y="435" width="2.9" height="3"></rect><rect x="625.70" y="350" width="2.9" height="3"></rect><rect x="625.70" y="435" width="2.9" height="3"></rect><rect x="630.24" y="350" width="2.9" height="3"></rect><rect x="630.24" y="435" width="2.9" height="3"></rect><rect x="634.78" y="350" width="2.9" height="3"></rect><rect x="634.78" y="435" width="2.9" height="3"></rect><rect x="639.32" y="350" width="2.9" height="3"></rect><rect x="639.32" y="435" width="2.9" height="3"></rect><rect x="643.86" y="350" width="2.9" height="3"></rect><rect x="643.86" y="435" width="2.9" height="3"></rect><rect x="648.40" y="350" width="2.9" height="3"></rect><rect x="648.40" y="435" width="2.9" height="3"></rect><rect x="652.94" y="350" width="2.9" height="3"></rect><rect x="652.94" y="435" width="2.9" height="3"></rect><rect x="657.48" y="350" width="2.9" height="3"></rect><rect x="657.48" y="435" width="2.9" height="3"></rect><rect x="662.02" y="350" width="2.9" height="3"></rect><rect x="662.02" y="435" width="2.9" height="3"></rect><rect x="666.56" y="350" width="2.9" height="3"></rect><rect x="666.56" y="435" width="2.9" height="3"></rect><rect x="671.10" y="350" width="2.9" height="3"></rect><rect x="671.10" y="435" width="2.9" height="3"></rect><rect x="675.64" y="350" width="2.9" height="3"></rect><rect x="675.64" y="435" width="2.9" height="3"></rect><rect x="680.18" y="350" width="2.9" height="3"></rect><rect x="680.18" y="435" width="2.9" height="3"></rect><rect x="441" y="353.20" width="3" height="2.9"></rect><rect x="688" y="353.20" width="3" height="2.9"></rect><rect x="441" y="357.74" width="3" height="2.9"></rect><rect x="688" y="357.74" width="3" height="2.9"></rect><rect x="441" y="362.28" width="3" height="2.9"></rect><rect x="688" y="362.28" width="3" height="2.9"></rect><rect x="441" y="366.82" width="3" height="2.9"></rect><rect x="688" y="366.82" width="3" height="2.9"></rect><rect x="441" y="371.36" width="3" height="2.9"></rect><rect x="688" y="371.36" width="3" height="2.9"></rect><rect x="441" y="375.90" width="3" height="2.9"></rect><rect x="688" y="375.90" width="3" height="2.9"></rect><rect x="441" y="380.44" width="3" height="2.9"></rect><rect x="688" y="380.44" width="3" height="2.9"></rect><rect x="441" y="384.98" width="3" height="2.9"></rect><rect x="688" y="384.98" width="3" height="2.9"></rect><rect x="441" y="389.52" width="3" height="2.9"></rect><rect x="688" y="389.52" width="3" height="2.9"></rect><rect x="441" y="394.06" width="3" height="2.9"></rect><rect x="688" y="394.06" width="3" height="2.9"></rect><rect x="441" y="398.60" width="3" height="2.9"></rect><rect x="688" y="398.60" width="3" height="2.9"></rect><rect x="441" y="403.14" width="3" height="2.9"></rect><rect x="688" y="403.14" width="3" height="2.9"></rect><rect x="441" y="407.68" width="3" height="2.9"></rect><rect x="688" y="407.68" width="3" height="2.9"></rect><rect x="441" y="412.22" width="3" height="2.9"></rect><rect x="688" y="412.22" width="3" height="2.9"></rect><rect x="441" y="416.76" width="3" height="2.9"></rect><rect x="688" y="416.76" width="3" height="2.9"></rect><rect x="441" y="421.30" width="3" height="2.9"></rect><rect x="688" y="421.30" width="3" height="2.9"></rect><rect x="441" y="425.84" width="3" height="2.9"></rect><rect x="688" y="425.84" width="3" height="2.9"></rect><rect x="441" y="430.38" width="3" height="2.9"></rect><rect x="688" y="430.38" width="3" height="2.9"></rect></g></svg>
<div class="a" style="left:446px;top:361px;width:240px;height:72px;border:1px solid #9bb8f8;border-radius:3px;box-sizing:border-box;"></div>
<div class="a" style="left:502px;top:359px;width:131px;height:5px;background:#2441a3;"></div>
<div class="t" style="left: 511px; top: 352.04px; color: rgb(255, 255, 255); font-size: 12px; line-height: 16px; letter-spacing: -0.3px; transform: scaleX(0.9963); transform-origin: 0px 0px;">Driver Wake-Up Delay</div>
<div class="a" style="left:456px;top:379px;width:220px;height:4px;background:#dfe6fb;"></div>
<div class="a" style="left:456px;top:371px;width:10px;height:21px;background:#1e94f0;"></div>
<div class="t" style="left: 515px; top: 404.34px; color: rgb(255, 255, 255); font-size: 12px; line-height: 16px; letter-spacing: -0.141px;">0 µs</div>
<div class="a" style="left:601px;top:399px;width:74px;height:23px;background:#4a67bd;"></div>
<div class="t" style="left: 624.3px; top: 403.84px; color: rgb(255, 255, 255); font-size: 12px; line-height: 16px; letter-spacing: -0.3px; transform: scaleX(0.921); transform-origin: 0px 0px;">Reset</div>
<div class="a" style="left:446px;top:454px;width:240px;height:94px;border:1px solid #c4c4c4;border-radius:3px;box-sizing:border-box;"></div>
<div class="a" style="left:512px;top:452px;width:111px;height:5px;background:#141414;"></div>
<div class="t" style="left: 521px; top: 445.04px; color: rgb(255, 255, 255); font-size: 12px; line-height: 16px; letter-spacing: -0.3px; transform: scaleX(0.9918); transform-origin: 0px 0px;">VBlank Frequency</div>
<div class="a" style="left:456px;top:472px;width:220px;height:4px;background:#e6e6e6;"></div>
<div class="a" style="left:458px;top:464px;width:10px;height:21px;background:#0078d7;"></div>
<div class="t" style="left: 510.5px; top: 497.34px; color: rgb(255, 255, 255); font-size: 12px; line-height: 16px; letter-spacing: -0.215px;">60 Hz</div>
<div class="a" style="left:601px;top:492px;width:74px;height:23px;background:#3c3c3c;"></div>
<div class="t" style="left: 624.3px; top: 496.84px; color: rgb(255, 255, 255); font-size: 12px; line-height: 16px; letter-spacing: -0.3px; transform: scaleX(0.921); transform-origin: 0px 0px;">Reset</div>
<div class="a" style="left:456px;top:523px;width:15px;height:15px;border:1px solid #ffffff;border-radius:1.5px;box-sizing:border-box;background:#000;"></div>
<div class="t" style="left: 478px; top: 523.34px; color: rgb(255, 255, 255); font-size: 12px; line-height: 16px; letter-spacing: -0.3px; transform: scaleX(0.9792); transform-origin: 0px 0px;">VBlank NTSC Fixup</div>
</body></html>
